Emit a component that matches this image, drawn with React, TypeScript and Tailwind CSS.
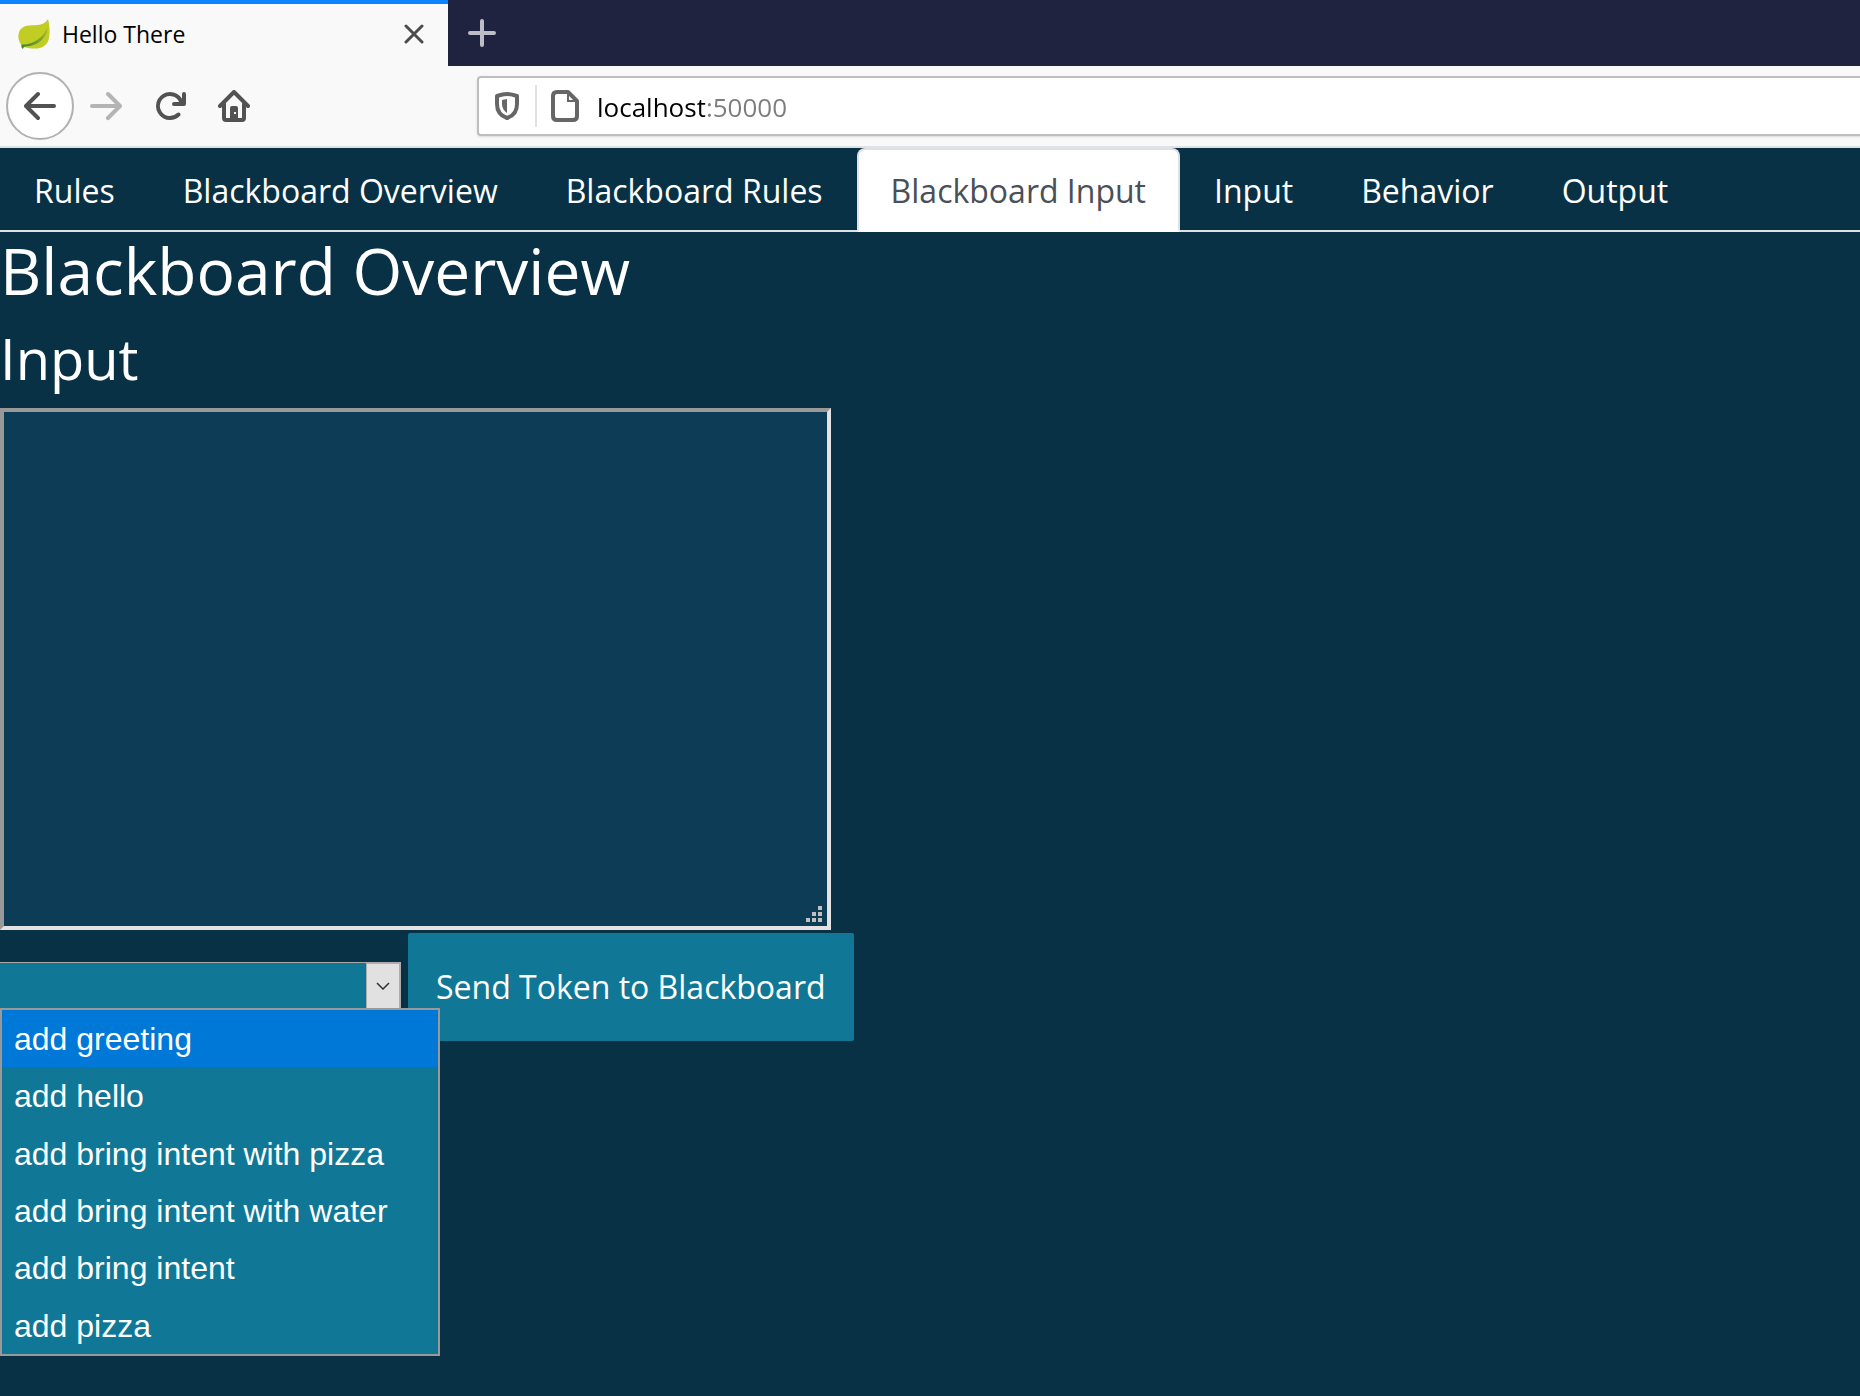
import { useState } from "react";

const navItems = ["Rules", "Blackboard Overview", "Blackboard Rules", "Blackboard Input", "Input", "Behavior", "Output"];

const tokens = ["add greeting", "add hello", "add bring intent with pizza", "add bring intent with water", "add bring intent", "add pizza"];

function LeafIcon() {
  return (
    <svg viewBox="0 0 32 32" className="size-8" aria-hidden="true">
      <defs>
        <linearGradient id="vein" x1="0" y1="1" x2="1" y2="0">
          <stop offset="0" stopColor="#3f8424" />
          <stop offset="1" stopColor="#a8bd2c" />
        </linearGradient>
      </defs>
      <path d="M30 1c1.500 6 2.500 14 .5 21-2 6-7 8.500-13 8.500-5 0-8-.5-10.500-1C2 27 0 22 .5 17 1 11 5 8 11 7.500 18 7 26 8 30 1z" fill="#c1cd23" />
      <path d="M3.500 26.500C15 27 25 20 29.500 9.500c0 9-8.500 18.500-22 19-1.500.2-2 .8-2.500 2.500-1.500-.5-2-3-1.500-4.500z" fill="url(#vein)" />
    </svg>
  );
}

function BackIcon() {
  return (
    <svg viewBox="0 0 16 16" className="size-8" fill="currentColor" aria-hidden="true">
      <path d="M15 7H3.414l4.293-4.293a1 1 0 0 0-1.414-1.414l-6 6a1 1 0 0 0 0 1.414l6 6a1 1 0 0 0 1.414-1.414L3.414 9H15a1 1 0 0 0 0-2z" />
    </svg>
  );
}

function ForwardIcon() {
  return (
    <svg viewBox="0 0 16 16" className="size-8" fill="currentColor" aria-hidden="true">
      <path d="M15.707 7.293l-6-6a1 1 0 0 0-1.414 1.414L12.586 7H1a1 1 0 0 0 0 2h11.586l-4.293 4.293a1 1 0 1 0 1.414 1.414l6-6a1 1 0 0 0 0-1.414z" />
    </svg>
  );
}

function ReloadIcon() {
  return (
    <svg viewBox="0 0 16 16" className="size-8" fill="currentColor" aria-hidden="true">
      <path d="M15 1a1 1 0 0 0-1 1v2.418A6.995 6.995 0 1 0 8 15a6.954 6.954 0 0 0 4.950-2.050 1 1 0 0 0-1.414-1.414A5.019 5.019 0 1 1 12.549 6H10a1 1 0 0 0 0 2h5a1 1 0 0 0 1-1V2a1 1 0 0 0-1-1z" />
    </svg>
  );
}

function HomeIcon() {
  return (
    <svg viewBox="0 0 32 32" className="size-8" fill="none" stroke="currentColor" strokeWidth="4" strokeLinecap="round" strokeLinejoin="round" aria-hidden="true">
      <path d="M2 16 16 2l14 14" />
      <path d="M6 14v14q0 2 2 2h16q2 0 2-2V14" />
      <path d="M12 30V18q0-2 2-2h4q2 0 2 2v12z" fill="currentColor" stroke="none" />
      <path d="M16 22h2v2h-2z" fill="#f9f9fa" stroke="none" />
    </svg>
  );
}

function ShieldIcon() {
  return (
    <svg viewBox="0 0 24 28" className="h-7 w-6" aria-hidden="true">
      <path d="M12 2C9 2 5 3 2 4v8c0 7 4 12 10 14 6-2 10-7 10-14V4c-3-1-7-2-10-2z" fill="none" stroke="#666" strokeWidth="4" strokeLinejoin="round" />
      <path d="M12 7v14c-3-2-5-5-5-9V8z" fill="#666" />
    </svg>
  );
}

function PageIcon() {
  return (
    <svg viewBox="0 0 28 32" className="h-8 w-7" fill="none" stroke="#666" aria-hidden="true">
      <path d="M6 2h11l9 9v15q0 4-4 4H6q-4 0-4-4V6q0-4 4-4z" strokeWidth="4" strokeLinejoin="round" />
      <path d="M17 2v9h9" strokeWidth="2" />
    </svg>
  );
}

export default function App() {
  const [active, setActive] = useState("Blackboard Input");
  const [url, setUrl] = useState("localhost:50000");

  return (
    <div className="flex min-h-screen flex-col overflow-hidden bg-[#093145] font-['Open_Sans',sans-serif] text-[32px] leading-[48px] text-white">
      <header className="bg-[#f9f9fa] text-black">
        <div className="flex h-[66px] bg-[#202340]">
          <div className="flex w-[448px] items-center border-t-4 border-[#0a84ff] bg-[#f9f9fa] pr-[22px] pb-[2px] pl-[18px]">
            <LeafIcon />
            <span className="ml-3 flex-1 text-[23px] leading-8">Hello There</span>
            <button type="button" aria-label="Close tab" className="flex size-6 items-center justify-center text-[#4c4c4e]">
              <svg viewBox="0 0 20 20" className="size-5" fill="none" stroke="currentColor" strokeWidth="3" strokeLinecap="round" aria-hidden="true">
                <path d="M2 2l16 16M18 2L2 18" />
              </svg>
            </button>
          </div>
          <button type="button" aria-label="New tab" className="flex w-[68px] items-center justify-center text-[#bcbdc6]">
            <svg viewBox="0 0 28 28" className="size-7" fill="none" stroke="currentColor" strokeWidth="4" strokeLinecap="round" aria-hidden="true">
              <path d="M14 2v24M2 14h24" />
            </svg>
          </button>
        </div>
        <div className="flex h-[82px] items-center border-b-2 border-[#e0e3e3] pl-[6px]">
          <button type="button" aria-label="Back" className="flex size-[68px] items-center justify-center rounded-full border-2 border-[#b1b1b1] bg-white text-[#525253]">
            <BackIcon />
          </button>
          <button type="button" aria-label="Forward" className="flex size-16 items-center justify-center text-[#b4b4b5]">
            <ForwardIcon />
          </button>
          <button type="button" aria-label="Reload" className="flex size-16 items-center justify-center text-[#525253]">
            <ReloadIcon />
          </button>
          <button type="button" aria-label="Home" className="flex size-16 items-center justify-center text-[#525253]">
            <HomeIcon />
          </button>
          <div className="-mr-2 ml-[211px] flex h-[60px] flex-1 items-center rounded border-2 border-[#bebebe] bg-white pl-4 shadow-sm">
            <ShieldIcon />
            <span className="ml-4 h-[42px] w-[2px] bg-[#e1e1e2]" />
            <span className="ml-[14px]">
              <PageIcon />
            </span>
            <input
              aria-label="Address"
              value={url}
              onChange={(e) => setUrl(e.target.value)}
              className="ml-[18px] h-12 flex-1 bg-[linear-gradient(90deg,#000_108px,#7c7c7d_108px)] bg-clip-text pt-[2px] text-[26px] text-transparent caret-black outline-none"
            />
          </div>
        </div>
      </header>

      <nav className="flex border-b-2 border-[#dee2e6]">
        {navItems.map((item) => (
          <a
            key={item}
            href="#"
            aria-current={item === active ? "page" : undefined}
            onClick={(e) => {
              e.preventDefault();
              setActive(item);
            }}
            className={
              item === active
                ? "-mb-[2px] rounded-t-lg border-2 border-[#dee2e6] border-b-white bg-white px-8 pt-[17px] pb-[15px] text-[#495057]"
                : "-mb-[2px] rounded-t-lg border-2 border-transparent px-8 pt-[17px] pb-[15px]"
            }
          >
            {item}
          </a>
        ))}
      </nav>

      <main>
        <h1 className="mb-4 text-[64px] leading-[77px]">Blackboard Overview</h1>
        <h2 className="mb-4 text-[56px] leading-[67px]">Input</h2>
        <div className="relative w-[831px]">
          <textarea
            aria-label="Token"
            className="block h-[522px] w-full resize-none border-4 border-t-[#999] border-r-[#e3e3e3] border-b-[#e3e3e3] border-l-[#999] bg-[#0d3d56] p-1 outline-none"
          />
          <svg viewBox="0 0 16 16" className="pointer-events-none absolute right-[9px] bottom-2 size-4" fill="#c0c0c0" aria-hidden="true">
            <path d="M12 0h4v4h-4zM6 6h4v4H6zM12 6h4v4h-4zM0 12h4v4H0zM6 12h4v4H6zM12 12h4v4h-4z" />
          </svg>
        </div>
        <div className="mt-[3px] flex items-center gap-[7px]">
          <div className="relative pb-[2px]">
            <select
              aria-label="Token template"
              defaultValue=""
              className="block h-12 w-[401px] appearance-none border-t border-r-2 border-[#a9a9a9] bg-[#107896] outline-none"
            >
              <option value="" />
              {tokens.map((token) => (
                <option key={token}>{token}</option>
              ))}
            </select>
            <span className="pointer-events-none absolute top-0 right-0 flex h-12 w-[35px] items-center justify-center border-2 border-l border-[#adadad] bg-[#e1e1e1]">
              <svg viewBox="0 0 14 8" className="h-2 w-[14px]" fill="none" stroke="#333" strokeWidth="1.500" aria-hidden="true">
                <path d="M1 1l6 6 6-6" />
              </svg>
            </span>
            <ul role="listbox" aria-label="Token templates" className="absolute top-[46px] left-0 grid h-[348px] w-[440px] grid-rows-6 border-2 border-[#999] bg-[#107896] font-['Liberation_Sans',sans-serif] leading-[55px]">
              {tokens.map((token, i) => (
                <li key={token} role="option" aria-selected={i === 0} className="px-3 pt-[2px] aria-selected:bg-[#0078d7]">
                  {token}
                </li>
              ))}
            </ul>
          </div>
          <button type="button" className="h-[108px] rounded-xs bg-[#107896] px-7">
            Send Token to Blackboard
          </button>
        </div>
      </main>
    </div>
  );
}
